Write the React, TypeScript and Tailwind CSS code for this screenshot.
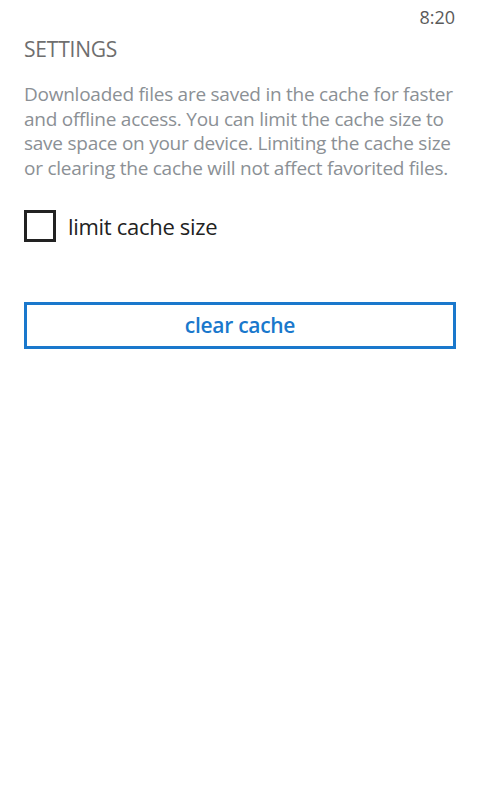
export default function App() {
  return (
    <div
      className="w-[480px] h-[800px] bg-white flex flex-col"
      style={{ fontFamily: '"Open Sans", "Noto Sans", sans-serif' }}
    >
      {/* Status bar */}
      <div className="h-[35px] flex items-start justify-end pr-[25px] pt-[4px]">
        <span className="text-[18px] text-[#5a5a5a]">8:20</span>
      </div>

      <div className="px-[24px] flex flex-col">
        <h1 className="text-[21px] leading-[28px] text-[#6e6e6e] tracking-[-0.2px]">SETTINGS</h1>

        <p className="mt-[19px] text-[19px] leading-[24.7px] text-[#8b9095] tracking-[-0.25px] whitespace-nowrap">
          <span className="block">Downloaded files are saved in the cache for faster</span>
          <span className="block">and offline access. You can limit the cache size to</span>
          <span className="block">save space on your device. Limiting the cache size</span>
          <span className="block">or clearing the cache will not affect favorited files.</span>
        </p>

        {/* Checkbox */}
        <label className="mt-[29px] flex items-center gap-[12px]">
          <span className="w-[32px] h-[32px] border-[3px] border-[#222] shrink-0" />
          <span className="text-[22px] text-[#222] tracking-[-0.3px]">limit cache size</span>
        </label>

        {/* Button */}
        <button className="mt-[59px] h-[47px] w-full border-[3px] border-[#1a78cc] text-[#1a78cc] text-[21px] font-semibold tracking-[-0.3px]">
          clear cache
        </button>
      </div>
    </div>
  )
}
